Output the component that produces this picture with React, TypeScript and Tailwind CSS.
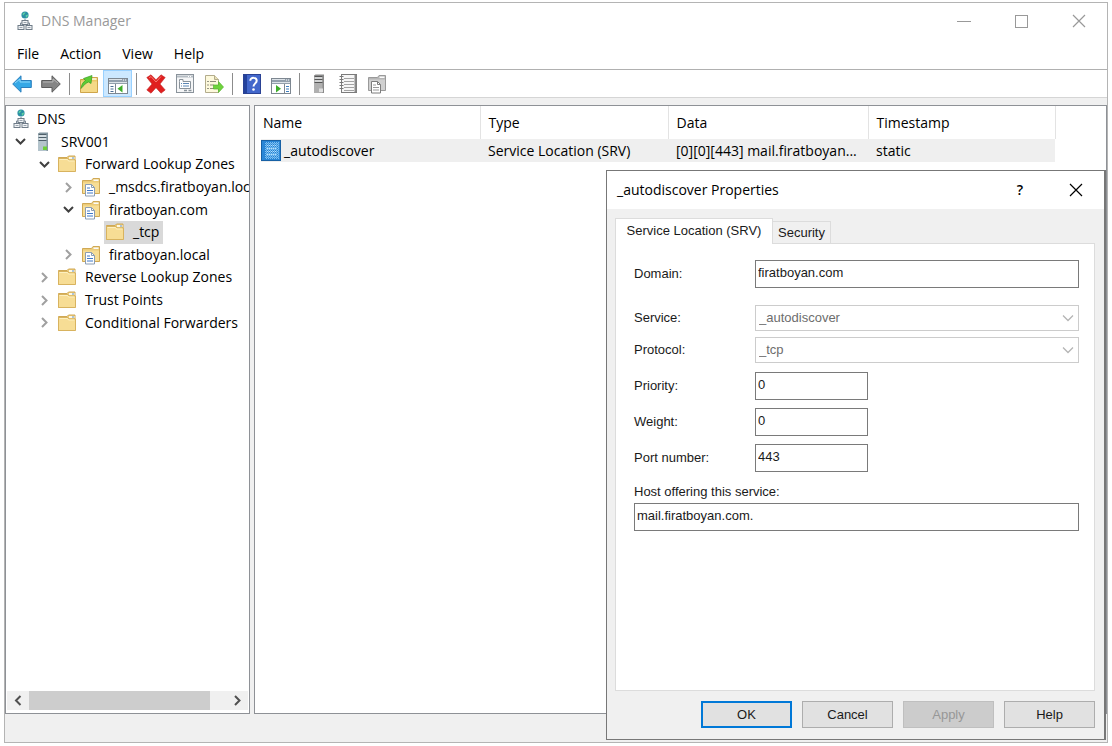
import type { ReactNode } from "react";
import clsx from "clsx";

type IconProps = { className?: string };

const NetworkIcon = ({ className }: IconProps) => (
  <svg viewBox="0 0 16 20" className={className} aria-hidden="true">
    <path d="M8 8v4M3.5 15v-3h9v3" fill="none" stroke="#7a8794" />
    <rect x="5" y="9.5" width="6" height="4" fill="#f2f4f6" stroke="#6f7c88" />
    <rect x="1" y="14.5" width="6" height="4" fill="#f2f4f6" stroke="#6f7c88" />
    <rect x="9" y="14.5" width="6" height="4" fill="#f2f4f6" stroke="#6f7c88" />
    <path d="M6.5 11.5h3M2.5 16.5h3M10.5 16.5h3" stroke="#98a3ad" />
    <circle cx="8" cy="4" r="3.6" fill="#2b8fa5" />
    <path d="M5.4 3.2C6 1.6 7.6 1.2 8.6 1.6 8.2 3 6.8 3 6.6 4.6zM8.6 4.2l2.4-.6c.1 1.6-.9 2.8-2 3.2z" fill="#5fd0a0" />
  </svg>
);

const ServerIcon = ({ className, gray }: IconProps & { gray?: boolean }) => (
  <svg viewBox="0 0 12 20" className={className} aria-hidden="true">
    <path d="M1 1.500l1.500-1H11v18.500H1z" fill={gray ? "#8a8a8a" : "#8497a1"} />
    <path d="M1 2h8.500v17H1z" fill={gray ? "#b0b0b0" : "#b4c4cc"} />
    <path d="M1.500 2.500h8M1.500 5.500h8M1.500 8.500h8" stroke={gray ? "#555" : "#4e5f69"} strokeWidth="1.2" />
    <path d="M2 4h7M2 7h7" stroke="#f4f7f8" />
    <rect x="6" y="14.5" width="4" height="3.500" fill={gray ? "#dedede" : "#6ccf3a"} />
  </svg>
);

const FolderIcon = ({ className }: IconProps) => (
  <svg viewBox="0 0 20 18" className={className} aria-hidden="true">
    <path d="M1.500 2.500h8.500l1.500-1.500h6.500v15.500h-16.500z" fill="#eccb78" stroke="#d0a955" />
    <path d="M12 2h5.500v2h-5.500z" fill="#fdf8e6" />
    <path d="M15 3h2" stroke="#5b8fc9" />
    <path d="M1.500 3.500h9.500l1 1.500h6.500v11.500h-17z" fill="#f7dd95" stroke="#d8b35f" />
    <path d="M2.500 4.500h8l1 1.500h6" fill="none" stroke="#fdf0c0" />
  </svg>
);

const ZoneIcon = ({ className, gray }: IconProps & { gray?: boolean }) => (
  <svg viewBox="0 0 20 20" className={className} aria-hidden="true">
    <path d="M1.500 3.500h9l1.500-2h6.500v15h-17z" fill={gray ? "#b5b5b5" : "#eccb78"} stroke={gray ? "#9a9a9a" : "#d0a955"} />
    <path d="M2 5.500h16v10.500h-16z" fill={gray ? "#d0d0d0" : "#f7dd95"} />
    <path d="M12.500 2.500h5v1.500h-5z" fill="#fafafa" />
    <path d="M4.500 7.500h6l3 3v8.500h-9z" fill="#fff" stroke={gray ? "#7d7d7d" : "#8b9db3"} />
    <path d="M10.500 7.500v3h3" fill="none" stroke={gray ? "#7d7d7d" : "#8b9db3"} />
    <path d="M6 11h3M6 13.500h6M6 16h6" stroke={gray ? "#9a9a9a" : "#3f78c8"} />
  </svg>
);

const NotebookIcon = ({ className }: IconProps) => (
  <svg viewBox="0 0 20 20" className={className} aria-hidden="true">
    <rect x="3.500" y=".5" width="15" height="18" fill="#f6f6f6" stroke="#7b7b7b" />
    <path d="M17.500 1v17" stroke="#8a8a8a" strokeWidth="2" />
    <path d="M6 4.500h10M6 7.500h10M6 10.500h10M6 13.500h10M6 16.500h10" stroke="#a3a3a3" />
    <path d="M1.500 2.500h4M1.500 5.500h4M1.500 8.500h4M1.500 11.500h4M1.500 14.500h4" stroke="#777" />
  </svg>
);

const SelectedRecordIcon = ({ className }: IconProps) => (
  <svg viewBox="0 0 20 21" className={className} aria-hidden="true">
    <defs>
      <pattern id="dither" width="2" height="2" patternUnits="userSpaceOnUse">
        <rect width="2" height="2" fill="#7cc0f2" />
        <rect width="1" height="1" fill="#2480d0" />
        <rect x="1" y="1" width="1" height="1" fill="#4a9be0" />
      </pattern>
    </defs>
    <rect width="20" height="21" fill="#2a86d6" />
    <rect x="4" y="2" width="14" height="17" fill="url(#dither)" />
    <path d="M6 5.500h10M6 8.500h10M6 11.500h10M6 14.500h10" stroke="#b5defa" strokeDasharray="1 1" />
    <rect x=".5" y=".5" width="19" height="20" fill="none" stroke="#063d75" strokeDasharray="1 1" />
  </svg>
);

const ArrowIcon = ({ forward }: { forward?: boolean }) => (
  <svg viewBox="0 0 20 20" className={clsx("size-5", forward && "rotate-180")} aria-hidden="true">
    <path
      d="M.7 10L9 1.800v4.700h10.300v7H9v4.700z"
      fill={forward ? "#858585" : "#35a8e6"}
      stroke={forward ? "#5c5c5c" : "#2b7fbd"}
    />
    <path d={forward ? "M3 11l5 4v-3h10" : "M3 9l5-4v3h10"} fill="none" stroke={forward ? "#b5b5b5" : "#8fd8fa"} />
  </svg>
);

const UpFolderIcon = () => (
  <svg viewBox="0 0 20 20" className="size-5" aria-hidden="true">
    <path d="M1.500 5.500h9l1.500-2h6.500v15h-17z" fill="#edc868" stroke="#cfa54a" />
    <path d="M2 7.500h16v10.500H2z" fill="#f5d987" />
    <path d="M13 5h4.500" stroke="#fffbe8" strokeWidth="1.500" />
    <path d="M2 14.500c.5-4 2-6.500 4.500-8L4.500 4.500 13 1.500l-1 8-2.500-1.500C7 9 5 11 2 14.500z" fill="#5ccc35" stroke="#3a9c22" strokeWidth=".7" />
  </svg>
);

const PaneIcon = ({ right }: { right?: boolean }) => (
  <svg viewBox="0 0 20 16" className="mt-1 h-4 w-5" aria-hidden="true">
    <rect x=".5" y=".5" width="19" height="15" fill="#fff" stroke="#7d8791" />
    <path d="M1 1h18v5H1z" fill="#93a0ad" />
    <path d="M1 1.500h13M1 4.500h18" stroke="#dde3e8" />
    <path d="M15 2h1M17 2h1" stroke="#fff" />
    {right ? (
      <>
        <path d="M13.500 6v10" stroke="#7d8791" />
        <path d="M15 8.500h3M15 11h3M15 13.500h3" stroke="#3e7fc1" />
        <path d="M5 7l5 3.800-5 3.800z" fill="#3fae2a" />
      </>
    ) : (
      <>
        <path d="M7.500 6v10" stroke="#7d8791" />
        <path d="M2.500 8.500h3M2.500 11h3M2.500 13.500h3" stroke="#4d6f94" />
        <path d="M14.500 7l-5 3.800 5 3.800z" fill="#3fae2a" />
      </>
    )}
  </svg>
);

const DeleteIcon = () => (
  <svg viewBox="0 0 20 20" className="size-5" aria-hidden="true">
    <path
      d="M.8 3.500L5 .8l5 5L15 .8l4.200 2.700L14 10l5.200 6L15 19.200l-5-5.500-5 5.500L.8 16 6 10z"
      fill="#e01f1f"
      stroke="#c22a2a"
      strokeWidth=".6"
    />
    <path d="M3 4l2-1.500 5 5.500 5-5.500" fill="none" stroke="#f57b72" />
  </svg>
);

const PropertiesIcon = () => (
  <svg viewBox="0 0 20 20" className="size-5" aria-hidden="true">
    <rect x="1.500" y=".5" width="17" height="18" fill="#f5f6f7" stroke="#8a939b" />
    <path d="M2 2.500h16" stroke="#b4bcc3" strokeWidth="2" />
    <path d="M13 2.500h1M15 2.500h1" stroke="#fff" />
    <path d="M4.500 7.500v-2h3.500v2h7.500v7h-11z" fill="#fff" stroke="#8a939b" />
    <path d="M6 9.500h1M8 9.500h6M6 12h1M8 12h6" stroke="#5b87b5" />
    <path d="M9 16.500h3M13.500 16.500h3" stroke="#8a939b" strokeWidth="1.500" />
  </svg>
);

const ExportIcon = () => (
  <svg viewBox="0 0 20 20" className="size-5" aria-hidden="true">
    <path d="M1.500 1.500h9l4 4v13h-13z" fill="#fdf9dc" stroke="#b3ac8c" />
    <path d="M10.500 1.500v4h4" fill="#e8e0b4" stroke="#b3ac8c" />
    <path d="M3.500 7.500h1M3.500 11h1M3.500 14.500h1" stroke="#333" />
    <path d="M6 7.500h6M6 11h4M6 14.500h5" stroke="#8f8b78" />
    <path d="M9.500 11h5V7.500l5 5.500-5 5.500V15h-5z" fill="#6fd33c" stroke="#55b52e" strokeWidth=".7" />
  </svg>
);

const HelpIcon = () => (
  <svg viewBox="0 0 18 20" className="h-5 w-[18px]" aria-hidden="true">
    <rect x=".5" y=".5" width="17" height="19" fill="#4267cb" stroke="#2a4294" />
    <path d="M1 1h3v18H1z" fill="#24429c" />
    <path d="M7.300 6.800c0-4 6.400-3.800 6.400 0 0 2.500-3.200 2.700-3.200 5.700" fill="none" stroke="#fff" strokeWidth="2" />
    <circle cx="10.500" cy="15.500" r="1.300" fill="#fff" />
  </svg>
);

const Chevron = ({ className, d = "M1 3l4.500 4.500L10 3" }: IconProps & { d?: string }) => (
  <svg viewBox="0 0 11 11" className={clsx("size-[11px]", className)} fill="none" stroke="currentColor" aria-hidden="true">
    <path d={d} strokeWidth="2" />
  </svg>
);

const CloseGlyph = () => (
  <svg viewBox="0 0 14 14" className="size-3.5" fill="none" stroke="currentColor" aria-hidden="true">
    <path d="M1 1l12 12M13 1L1 13" strokeWidth="1.200" />
  </svg>
);

const toolGroups: { label: string; icon: ReactNode; active?: boolean }[][] = [
  [
    { label: "Back", icon: <ArrowIcon /> },
    { label: "Forward", icon: <ArrowIcon forward /> },
  ],
  [
    { label: "Up one level", icon: <UpFolderIcon /> },
    { label: "Show console tree", icon: <PaneIcon />, active: true },
  ],
  [
    { label: "Delete", icon: <DeleteIcon /> },
    { label: "Properties", icon: <PropertiesIcon /> },
    { label: "Export list", icon: <ExportIcon /> },
  ],
  [
    { label: "Help", icon: <HelpIcon /> },
    { label: "Show action pane", icon: <PaneIcon right /> },
  ],
  [
    { label: "New server", icon: <ServerIcon gray className="h-5 w-3" /> },
    { label: "New record", icon: <NotebookIcon className="size-5" /> },
    { label: "New zone", icon: <ZoneIcon gray className="size-5" /> },
  ],
];

type Node = {
  label: string;
  level: 0 | 1 | 2 | 3 | 4;
  kind: "root" | "server" | "folder" | "zone";
  open?: boolean;
  leaf?: boolean;
  selected?: boolean;
};

const nodes: Node[] = [
  { label: "DNS", level: 0, kind: "root", leaf: true },
  { label: "SRV001", level: 1, kind: "server", open: true },
  { label: "Forward Lookup Zones", level: 2, kind: "folder", open: true },
  { label: "_msdcs.firatboyan.local", level: 3, kind: "zone" },
  { label: "firatboyan.com", level: 3, kind: "zone", open: true },
  { label: "_tcp", level: 4, kind: "folder", leaf: true, selected: true },
  { label: "firatboyan.local", level: 3, kind: "zone" },
  { label: "Reverse Lookup Zones", level: 2, kind: "folder" },
  { label: "Trust Points", level: 2, kind: "folder" },
  { label: "Conditional Forwarders", level: 2, kind: "folder" },
];

const indent = ["pl-1", "pl-0.5", "pl-[26px]", "pl-[50px]", "pl-[98px]"];

const nodeIcon = {
  root: <NetworkIcon className="h-5 w-4" />,
  server: <ServerIcon className="h-5 w-3" />,
  folder: <FolderIcon className="h-[18px] w-5" />,
  zone: <ZoneIcon className="size-5" />,
};

const TreeNode = ({ node }: { node: Node }) => (
  <li
    role="treeitem"
    aria-expanded={node.leaf ? undefined : !!node.open}
    aria-selected={!!node.selected}
    className={clsx("flex items-center whitespace-nowrap", indent[node.level])}
  >
    {!node.leaf && (
      <button aria-label={`Toggle ${node.label}`} className="flex w-6 shrink-0 justify-center">
        {node.open ? <Chevron className="text-[#404040]" /> : <Chevron d="M3 1l4.500 4.500L3 10" className="text-[#a0a0a0]" />}
      </button>
    )}
    <span className={clsx("flex h-full items-center pr-1 pl-px", node.selected && "bg-[#d9d9d9]")}>
      <span className={clsx("flex w-5 shrink-0 justify-center", node.kind === "root" ? "mr-1.5" : "mr-2")}>
        {nodeIcon[node.kind]}
      </span>
      {node.label}
    </span>
  </li>
);

const TreePane = () => (
  <nav className="flex w-[245px] shrink-0 flex-col overflow-hidden border border-[#8e9196] bg-white">
    <ul role="tree" aria-label="Console tree" className="mt-0.5 grid h-[226px] auto-rows-fr">
      {nodes.map((node) => (
        <TreeNode key={node.label} node={node} />
      ))}
    </ul>
    <div className="mx-px mt-auto mb-[3px] flex h-[19px] items-stretch bg-[#f0f0f0] text-[#505050]">
      <button aria-label="Scroll left" className="flex w-[22px] items-center justify-center">
        <Chevron d="M7.500 1L3 5.500 7.500 10" />
      </button>
      <div className="flex flex-1">
        <div className="w-11/12 bg-[#cdcdcd]" />
      </div>
      <button aria-label="Scroll right" className="flex w-[22px] items-center justify-center">
        <Chevron d="M3 1l4.500 4.500L3 10" />
      </button>
    </div>
  </nav>
);

const RecordList = () => (
  <section className="min-w-0 flex-1 overflow-hidden border border-[#8e9196] bg-white">
    <table className="w-[800px] table-fixed border-collapse text-left whitespace-nowrap">
      <colgroup>
        <col className="w-[225px]" />
        <col className="w-[188px]" />
        <col className="w-[200px]" />
        <col className="w-[187px]" />
      </colgroup>
      <thead>
        <tr className="h-[33px]">
          {["Name", "Type", "Data", "Timestamp"].map((name) => (
            <th key={name} className="border-r border-[#e3e3e3] px-2 font-normal">
              {name}
            </th>
          ))}
        </tr>
      </thead>
      <tbody>
        <tr>
          <td className="p-0 pl-1.5">
            <span className="flex h-[23px] items-center gap-[3px] bg-[#efefef]">
              <SelectedRecordIcon className="h-[21px] w-5" />
              <span>_autodiscover</span>
            </span>
          </td>
          <td className="bg-[#efefef] px-2 py-0">Service Location (SRV)</td>
          <td className="bg-[#efefef] px-2 py-0">[0][0][443] mail.firatboyan...</td>
          <td className="bg-[#efefef] px-2 py-0">static</td>
        </tr>
      </tbody>
    </table>
  </section>
);

const Field = ({ id, label, value, wide }: { id: string; label: string; value: string; wide?: boolean }) => (
  <div className="flex items-center">
    <label htmlFor={id} className="w-[121px] shrink-0">
      {label}
    </label>
    <input
      id={id}
      defaultValue={value}
      className={clsx("h-7 border border-[#7a7a7a] bg-white px-0.5 pb-1 outline-none", wide ? "min-w-0 flex-1" : "w-[113px]")}
    />
  </div>
);

const DisabledSelect = ({ id, label, value }: { id: string; label: string; value: string }) => (
  <div className="flex items-center">
    <label htmlFor={id} className="w-[121px] shrink-0">
      {label}
    </label>
    <div className="relative flex-1">
      <select
        id={id}
        disabled
        className="block h-[26px] w-full appearance-none border border-[#cccccc] bg-white px-[3px] text-[#6d6d6d] opacity-100"
      >
        <option>{value}</option>
      </select>
      <svg viewBox="0 0 12 8" className="absolute top-[9px] right-[5px] h-2 w-3" fill="none" stroke="#b5b5b5" aria-hidden="true">
        <path d="M1 1.500l5 5 5-5" strokeWidth="1.300" />
      </svg>
    </div>
  </div>
);

const dialogButton = "h-[27px] w-[91px] border";

const PropertiesDialog = () => (
  <div
    role="dialog"
    aria-labelledby="dialog-title"
    className="absolute top-[167px] right-px bottom-0.5 flex w-[500px] flex-col border border-r-2 border-[#777777] bg-[#f0f0f0] font-['Liberation_Sans',Arial,sans-serif] text-[13px] leading-4 text-[#1a1a1a]"
  >
    <header className="flex h-[38px] shrink-0 items-center bg-white pr-[18px] pl-2.5 font-['Open_Sans','Noto_Sans',sans-serif] text-sm text-black">
      <h2 id="dialog-title" className="flex-1">
        _autodiscover Properties
      </h2>
      <button aria-label="What's this?" className="mr-9 w-5 font-semibold">
        ?
      </button>
      <button aria-label="Close dialog" className="flex w-5 justify-center">
        <CloseGlyph />
      </button>
    </header>
    <div className="flex min-h-0 flex-1 flex-col pt-[9px] pr-[9px] pl-2">
      <div role="tablist" className="flex items-end">
        <button
          role="tab"
          aria-selected="true"
          className="z-10 -mb-px h-[26px] w-[158px] border border-b-0 border-[#dcdcdc] bg-white pb-0.5"
        >
          Service Location (SRV)
        </button>
        <button role="tab" aria-selected="false" className="h-[22px] w-[58px] border border-b-0 border-l-0 border-[#dcdcdc]">
          Security
        </button>
      </div>
      <form className="flex flex-1 flex-col border border-[#dcdcdc] bg-white px-[15px] pt-4 pl-[18px]">
        <Field id="domain" label="Domain:" value="firatboyan.com" wide />
        <div className="mt-[17px] flex flex-col gap-1.5">
          <DisabledSelect id="service" label="Service:" value="_autodiscover" />
          <DisabledSelect id="protocol" label="Protocol:" value="_tcp" />
        </div>
        <div className="mt-[9px] flex flex-col gap-2">
          <Field id="priority" label="Priority:" value="0" />
          <Field id="weight" label="Weight:" value="0" />
          <Field id="port" label="Port number:" value="443" />
        </div>
        <label htmlFor="host" className="mt-3">
          Host offering this service:
        </label>
        <input
          id="host"
          defaultValue="mail.firatboyan.com."
          className="mt-[3px] h-7 border border-[#7a7a7a] bg-white px-0.5 pb-1 outline-none"
        />
      </form>
    </div>
    <footer className="flex h-12 shrink-0 items-start justify-end gap-2.5 pt-2.5 pr-[9px]">
      <button className="h-[27px] w-[91px] border-2 border-[#0078d7] bg-[#e1e1e1]">OK</button>
      <button className={clsx(dialogButton, "border-[#adadad] bg-[#e1e1e1]")}>Cancel</button>
      <button disabled className={clsx(dialogButton, "border-[#bfbfbf] bg-[#cccccc] text-[#979797]")}>
        Apply
      </button>
      <button className={clsx(dialogButton, "border-[#adadad] bg-[#e1e1e1]")}>Help</button>
    </footer>
  </div>
);

const App = () => (
  <div className="flex min-h-screen bg-white px-1 pt-0.5 pb-[3px] font-['Open_Sans','Noto_Sans',sans-serif] text-sm leading-5 text-black">
    <main className="relative flex min-w-0 flex-1 flex-col border border-[#b4b4b4] bg-white">
      <header className="flex h-9 items-center pr-[21px] pl-3 text-[#999999]">
        <NetworkIcon className="mr-2 h-5 w-4" />
        <h1 className="flex-1">DNS Manager</h1>
        <div className="flex items-center gap-11">
          <button aria-label="Minimize" className="flex h-3.5 w-3.5 items-center">
            <span className="h-px w-full bg-[#999999]" />
          </button>
          <button aria-label="Maximize" className="size-[13px] border border-[#999999]" />
          <button aria-label="Close">
            <CloseGlyph />
          </button>
        </div>
      </header>
      <div role="menubar" className="flex h-[30px] items-center gap-[21px] pl-3">
        {["File", "Action", "View", "Help"].map((item) => (
          <button key={item} role="menuitem">
            {item}
          </button>
        ))}
      </div>
      <div role="toolbar" className="flex h-[29px] items-center border-y border-t-[#b0b0b0] border-b-[#d5d5d5] pl-0.5">
        {toolGroups.map((group, i) => (
          <div key={i} className="flex h-full items-center">
            {i > 0 && <span className="mx-1 h-[22px] w-px bg-[#8c8c8c]" />}
            {group.map((tool) => (
              <button
                key={tool.label}
                aria-label={tool.label}
                className={clsx(
                  "flex h-full w-[29px] items-center justify-center",
                  tool.active && "border border-[#99d1ff] bg-[#cce8ff]",
                )}
              >
                {tool.icon}
              </button>
            ))}
          </div>
        ))}
      </div>
      <div className="flex flex-1 gap-1 bg-[#f0f0f0] pt-[7px]">
        <TreePane />
        <RecordList />
      </div>
      <footer className="h-7 bg-[#f0f0f0]" />
      <PropertiesDialog />
    </main>
  </div>
);

export default App;
